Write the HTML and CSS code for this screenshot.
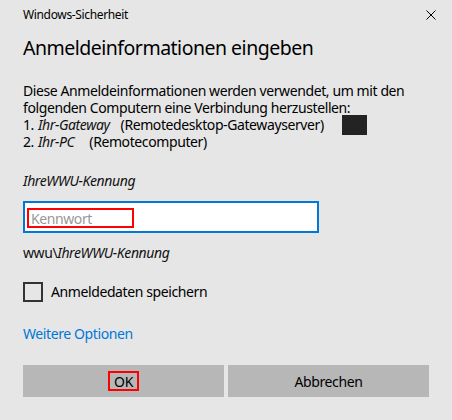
FILE: index.html
```html
<!DOCTYPE html>
<html lang="de">
<head>
<meta charset="utf-8">
<title>Windows-Sicherheit</title>
<link rel="stylesheet" href="styles.css">
</head>
<body>
<div class="dialog">
  <div class="titlebar">
    <span class="title">Windows-Sicherheit</span>
    <svg class="close" width="10" height="10" viewBox="0 0 10 10" aria-label="Schließen">
      <path d="M0.5 0.5 L9.5 9.5 M9.5 0.5 L0.5 9.5" stroke="#000" stroke-width="1" fill="none"/>
    </svg>
  </div>
  <h1 class="heading">Anmeldeinformationen eingeben</h1>
  <div class="info">
    <p class="line">Diese Anmeldeinformationen werden verwendet, um mit den</p>
    <p class="line">folgenden Computern eine Verbindung herzustellen:</p>
    <p class="line target"><span>1.</span><em class="host">Ihr-Gateway</em><span class="desc desc-gw">(Remotedesktop-Gatewayserver)</span><span class="redact"></span></p>
    <p class="line target"><span>2.</span><em class="host">Ihr-PC</em><span class="desc desc-pc">(Remotecomputer)</span></p>
  </div>
  <div class="user">IhreWWU-Kennung</div>
  <div class="field">
    <div class="mark mark-field"><span class="placeholder">Kennwort</span></div>
  </div>
  <div class="domain">wwu\<em>IhreWWU-Kennung</em></div>
  <div class="check"><span class="box"></span><span>Anmeldedaten speichern</span></div>
  <div class="more">Weitere Optionen</div>
  <div class="buttons">
    <div class="btn"><span class="mark mark-ok">OK</span></div>
    <div class="btn">Abbrechen</div>
  </div>
</div>
</body>
</html>
```

FILE: styles.css
```css
* { box-sizing: border-box; }
html, body { margin: 0; padding: 0; }
body {
  width: 452px;
  height: 420px;
  background: #e6e6e6;
  font-family: "Noto Sans", "Open Sans", sans-serif;
  color: #000;
  overflow: hidden;
}
.dialog {
  padding: 0 16px 0 23px;
  display: flex;
  flex-direction: column;
}
.titlebar {
  display: flex;
  justify-content: space-between;
  align-items: center;
  height: 30px;
}
.title {
  font-size: 12px;
  line-height: 16px;
  letter-spacing: -0.35px;
}
.close { display: block; }
.heading {
  margin: 4px 0 0;
  font-size: 19.5px;
  font-weight: 400;
  line-height: 28px;
  letter-spacing: -0.5px;
}
.info { margin-top: 20px; }
.line {
  margin: 0;
  font-size: 14px;
  line-height: 17px;
  height: 17px;
  letter-spacing: -0.4px;
  white-space: nowrap;
}
.target { display: flex; align-items: center; }
.host { margin-left: 4px; color: #111; }
.desc-gw { margin-left: 11px; }
.desc-pc { margin-left: 15px; }
.redact {
  display: inline-block;
  width: 25px;
  height: 20px;
  background: #232323;
  margin-left: 18px;
}
.user {
  margin-top: 21px;
  font-size: 14px;
  line-height: 20px;
  font-style: italic;
  letter-spacing: -0.4px;
  color: #111;
}
.field {
  margin-top: 10px;
  width: 296px;
  height: 32px;
  background: #fff;
  border: 2px solid #0078d7;
  padding: 5px 0 0 2px;
}
.mark { border: 2px solid #f00; }
.mark-field {
  width: 107px;
  height: 20px;
  display: flex;
  align-items: center;
  padding-left: 2px;
}
.placeholder {
  font-size: 14px;
  color: #999;
  letter-spacing: -0.4px;
}
.domain {
  margin-top: 10px;
  font-size: 14px;
  line-height: 20px;
  letter-spacing: -0.4px;
  color: #111;
}
.domain em { font-style: italic; }
.check {
  margin-top: 19px;
  display: flex;
  align-items: center;
  gap: 8px;
  font-size: 14px;
  line-height: 20px;
  letter-spacing: -0.4px;
}
.box {
  width: 20px;
  height: 20px;
  border: 2px solid #333;
}
.more {
  margin-top: 22px;
  font-size: 14px;
  line-height: 20px;
  color: #0078d7;
  letter-spacing: -0.4px;
}
.buttons {
  margin-top: 21px;
  display: flex;
  gap: 4px;
  width: 406px;
}
.btn {
  flex: 1;
  height: 32px;
  background: #b7b7b7;
  display: flex;
  align-items: center;
  justify-content: center;
  font-size: 14px;
  letter-spacing: -0.4px;
}
.mark-ok {
  height: 20px;
  width: 31px;
  display: flex;
  align-items: center;
  justify-content: center;
}
```
